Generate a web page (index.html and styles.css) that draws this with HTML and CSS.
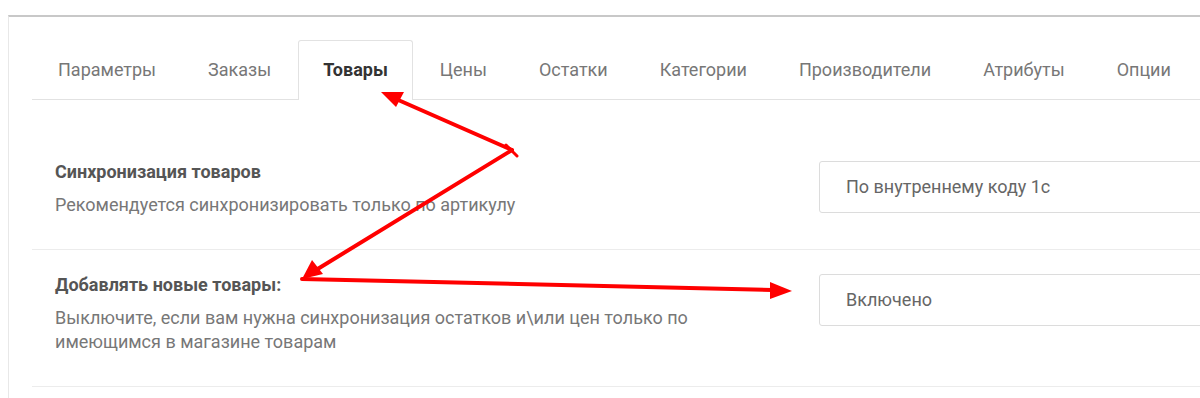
FILE: index.html
```html
<!DOCTYPE html>
<html lang="ru">
  <head>
    <meta charset="UTF-8" />
    <meta name="viewport" content="width=device-width, initial-scale=1.0" />
    <title>Обмен с 1С</title>
    <link rel="stylesheet" href="styles.css">
  </head>
  <body>
    <div class="page">
      <div class="panel">
        <ul class="tabs">
          <li class="tab">Параметры</li>
          <li class="tab">Заказы</li>
          <li class="tab active">Товары</li>
          <li class="tab">Цены</li>
          <li class="tab">Остатки</li>
          <li class="tab">Категории</li>
          <li class="tab">Производители</li>
          <li class="tab">Атрибуты</li>
          <li class="tab">Опции</li>
        </ul>

        <div class="tab-content">
          <div class="setting">
            <div class="setting-info">
              <div class="setting-title">Синхронизация товаров</div>
              <div class="setting-desc">Рекомендуется синхронизировать только по артикулу</div>
            </div>
            <div class="setting-control">
              <div class="select">По внутреннему коду 1с</div>
            </div>
          </div>

          <div class="setting">
            <div class="setting-info">
              <div class="setting-title">Добавлять новые товары:</div>
              <div class="setting-desc">Выключите, если вам нужна синхронизация остатков и\или цен только по имеющимся в магазине товарам</div>
            </div>
            <div class="setting-control">
              <div class="select">Включено</div>
            </div>
          </div>
        </div>
      </div>
    </div>

    <!-- стрелки поверх скриншота -->
    <svg class="arrows" width="1200" height="398" viewBox="0 0 1200 398">
      <g stroke="#ff0000" stroke-width="4" stroke-linecap="round" fill="none">
        <line x1="512" y1="150" x2="396" y2="99" />
        <line x1="512" y1="150" x2="316" y2="270" />
        <line x1="302" y1="279" x2="772" y2="290" />
        <line x1="506" y1="145" x2="517" y2="156" stroke-width="3" />
      </g>
      <g fill="#ff0000">
        <polygon points="381,92 404,92 396,107" />
        <polygon points="302,279 312,260 323,274" />
        <polygon points="792,291 770,282 770,299" />
      </g>
    </svg>
  </body>
</html>
```

FILE: styles.css
```css
body {
  margin: 0;
  padding: 0;
  background-color: #fff;
  font-family: Roboto, "Liberation Sans", Arial, sans-serif;
  color: #333;
  overflow: hidden;
}

.page {
  padding: 15px 0 0 8px;
}

.panel {
  background-color: #fff;
  border-top: 2px solid #c8c8c8;
  border-left: 1px solid #e8e8e8;
  padding: 23px 0 0 23px;
  min-height: 400px;
}

.tabs {
  display: flex;
  list-style: none;
  margin: 0;
  padding: 0;
  border-bottom: 1px solid #e2e2e2;
}

.tab {
  padding: 19px 24px;
  margin-right: 2px;
  margin-bottom: -1px;
  font-size: 18px;
  line-height: 20px;
  color: #777;
  border: 1px solid transparent;
  border-bottom: none;
  border-radius: 3px 3px 0 0;
  white-space: nowrap;
}

.tab:first-child {
  padding-left: 25px;
}

.tab.active {
  color: #333;
  font-weight: bold;
  background-color: #fff;
  border-color: #e2e2e2;
  padding-bottom: 20px;
}

.tab-content {
  padding-top: 37px;
}

.setting {
  display: grid;
  grid-template-columns: 680px 420px;
  column-gap: 84px;
  padding: 24px 0 32px 23px;
  border-bottom: 1px solid #ececec;
}

.setting-title {
  font-size: 18px;
  font-weight: bold;
  line-height: 22px;
  color: #555;
  margin-bottom: 10px;
}

.setting-desc {
  font-size: 18px;
  line-height: 24px;
  color: #777;
}

.select {
  height: 50px;
  border: 1px solid #dcdcdc;
  border-radius: 3px;
  padding: 0 26px;
  font-size: 18px;
  line-height: 50px;
  color: #666;
}

.arrows {
  position: absolute;
  top: 0;
  left: 0;
  pointer-events: none;
}
```
